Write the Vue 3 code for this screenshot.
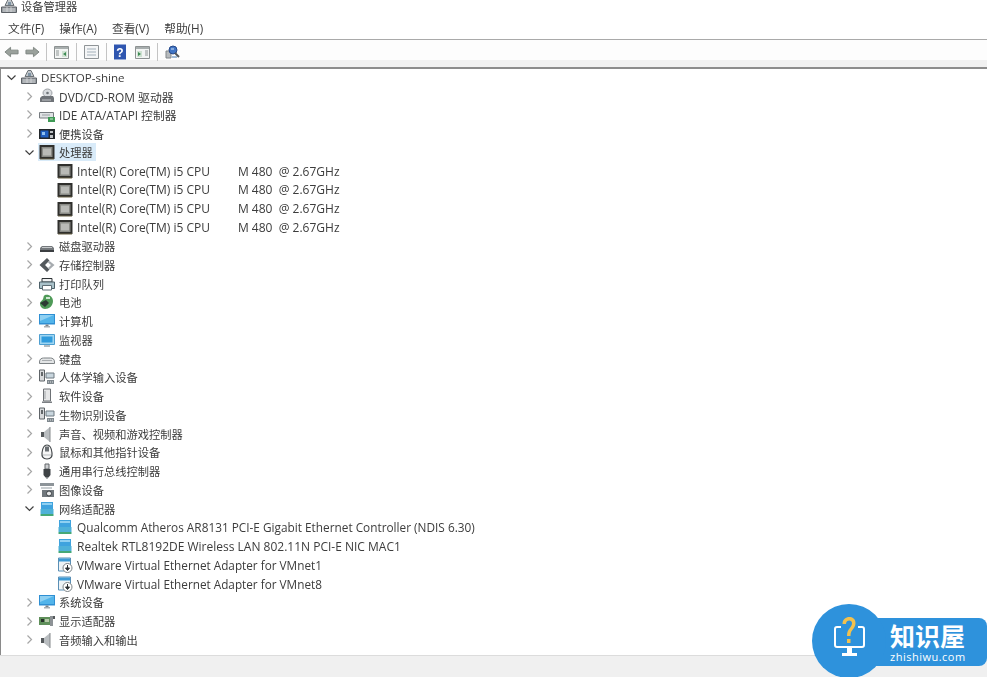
<script setup>
const menus = ['文件(F)', '操作(A)', '查看(V)', '帮助(H)']
const cpuName = 'Intel(R) Core(TM) i5 CPU         M 480  @ 2.67GHz'

// lv: tree depth, open: undefined = no arrow, fs: font size when it is not the CJK default
const rows = [
  { lv: 0, open: true, icon: 'host', text: 'DESKTOP-shine', fs: 11.6 },
  { lv: 1, open: false, icon: 'dvd', text: 'DVD/CD-ROM 驱动器', fs: 11.9 },
  { lv: 1, open: false, icon: 'ide', text: 'IDE ATA/ATAPI 控制器', fs: 11.8 },
  { lv: 1, open: false, icon: 'portable', text: '便携设备' },
  { lv: 1, open: true, icon: 'cpu', text: '处理器', selected: true },
  { lv: 2, icon: 'cpu', text: cpuName, fs: 12 },
  { lv: 2, icon: 'cpu', text: cpuName, fs: 12 },
  { lv: 2, icon: 'cpu', text: cpuName, fs: 12 },
  { lv: 2, icon: 'cpu', text: cpuName, fs: 12 },
  { lv: 1, open: false, icon: 'disk', text: '磁盘驱动器' },
  { lv: 1, open: false, icon: 'storage', text: '存储控制器' },
  { lv: 1, open: false, icon: 'printer', text: '打印队列' },
  { lv: 1, open: false, icon: 'battery', text: '电池' },
  { lv: 1, open: false, icon: 'computer', text: '计算机' },
  { lv: 1, open: false, icon: 'monitor', text: '监视器' },
  { lv: 1, open: false, icon: 'keyboard', text: '键盘' },
  { lv: 1, open: false, icon: 'hid', text: '人体学输入设备' },
  { lv: 1, open: false, icon: 'soft', text: '软件设备' },
  { lv: 1, open: false, icon: 'hid', text: '生物识别设备' },
  { lv: 1, open: false, icon: 'sound', text: '声音、视频和游戏控制器' },
  { lv: 1, open: false, icon: 'mouse', text: '鼠标和其他指针设备' },
  { lv: 1, open: false, icon: 'usb', text: '通用串行总线控制器' },
  { lv: 1, open: false, icon: 'camera', text: '图像设备' },
  { lv: 1, open: true, icon: 'net', text: '网络适配器' },
  { lv: 2, icon: 'net', text: 'Qualcomm Atheros AR8131 PCI-E Gigabit Ethernet Controller (NDIS 6.30)', fs: 11.82 },
  { lv: 2, icon: 'net', text: 'Realtek RTL8192DE Wireless LAN 802.11N PCI-E NIC MAC1', fs: 12 },
  { lv: 2, icon: 'vm', text: 'VMware Virtual Ethernet Adapter for VMnet1', fs: 11.76 },
  { lv: 2, icon: 'vm', text: 'VMware Virtual Ethernet Adapter for VMnet8', fs: 11.76 },
  { lv: 1, open: false, icon: 'computer', text: '系统设备' },
  { lv: 1, open: false, icon: 'display', text: '显示适配器' },
  { lv: 1, open: false, icon: 'sound', text: '音频输入和输出' },
]
</script>

<template>
  <div class="window">
    <svg class="defs" width="0" height="0">
      <symbol id="i-host" viewBox="0 0 16 16">
        <path d="M7 1.500h3l3 6H4z" fill="#c3c8cc" stroke="#6d7378"/>
        <path d="M7 4h3v3H7z" fill="#7f93a3"/>
        <path d="M.5 9h15v5.500H.5z" fill="#9a9fa4" stroke="#5c6166"/>
        <path d="M2 11h12M2 13h12M6 9v5M10 9v5" stroke="#dfe2e4" stroke-width=".7"/>
      </symbol>
      <symbol id="i-dvd" viewBox="0 0 16 16">
        <ellipse cx="8.500" cy="5" rx="4.500" ry="4" fill="#d9dcdf" stroke="#9a9ea3"/>
        <circle cx="8.500" cy="5" r="1.300" fill="#70757a"/>
        <path d="M1 10l2-2h11l1 2v4H1z" fill="#6f7378"/>
        <path d="M3 12h9" stroke="#c4c7ca"/>
      </symbol>
      <symbol id="i-ide" viewBox="0 0 16 16">
        <path d="M.5 5.500h14v5.500H.5z" fill="#dfe2e4" stroke="#777c80"/>
        <path d="M3 8h8" stroke="#9ba0a4"/>
        <path d="M9 10h7v5H9z" fill="#3f9a55"/>
        <path d="M11 12h3" stroke="#c7e8cf"/>
      </symbol>
      <symbol id="i-portable" viewBox="0 0 16 16">
        <path d="M0 3h16v10H0z" fill="#23272b"/>
        <path d="M1.500 4.500h8v7h-8z" fill="#1f5fc0"/>
        <path d="M3 6h3v3H3z" fill="#8ec0f0"/>
        <path d="M11 5h3v2h-3zM11 9h3v3h-3z" fill="#bfc3c6"/>
      </symbol>
      <symbol id="i-cpu" viewBox="0 0 16 16">
        <path d="M.5 1h15v14H.5z" fill="#2f2f2c"/>
        <path d="M2.500 3h11v10h-11z" fill="#8a8b86"/>
        <path d="M4 4.500h8v7H4z" fill="#b9bab6"/>
        <path d="M1 15h14" stroke="#6b6247"/>
      </symbol>
      <symbol id="i-disk" viewBox="0 0 16 16">
        <path d="M1 10l2-2h10l2 2v4H1z" fill="#74787c"/>
        <path d="M1 12h14v2H1z" fill="#3b3e41"/>
        <path d="M3 9.500h10" stroke="#c6c9cb"/>
      </symbol>
      <symbol id="i-storage" viewBox="0 0 16 16">
        <path d="M8 1L.5 8 8 15l2.500-2.500L6 8l4.500-4.500z" fill="#54595d"/>
        <path d="M10.500 4L15.500 8l-5 4.500L9 11l3-3-3-2.500z" fill="#a6abaf"/>
      </symbol>
      <symbol id="i-printer" viewBox="0 0 16 16">
        <path d="M3 2.500h10V6H3z" fill="#f1f2f3" stroke="#2d3235"/>
        <path d="M.5 6h15v6.500H.5z" fill="#a9c1c9" stroke="#4d6068"/>
        <path d="M3.500 9.500h9V14h-9z" fill="#fff" stroke="#5e6d74"/>
      </symbol>
      <symbol id="i-battery" viewBox="0 0 16 16">
        <path d="M6 1c4-1 8 2 8 6 0 5-4 8-8 8-3 0-5-3-5-5 0-3 2-3 3-5s0-3 2-4z" fill="#4f9a58"/>
        <path d="M1 9l6-3 3 3-4 4z" fill="#2c3a33"/>
        <path d="M7 3h4v2H7z" fill="#cfe7d2"/>
      </symbol>
      <symbol id="i-computer" viewBox="0 0 16 16">
        <path d="M0 1h16v10.500H0z" fill="#2f8fd3"/>
        <path d="M1 2h14v8H1z" fill="#52b4ea"/>
        <path d="M1 2h14L1 8z" fill="#8ed0f2"/>
        <path d="M5 13h6v1.500H5z" fill="#a7adb2"/>
        <path d="M6.500 11.500h3V13h-3z" fill="#7f858a"/>
      </symbol>
      <symbol id="i-monitor" viewBox="0 0 16 16">
        <path d="M.5 2.500h15v10H.5z" fill="#9fd6f2" stroke="#4e9fd1"/>
        <path d="M2.500 4.500h11v6h-11z" fill="#2f9bdc"/>
        <path d="M5 14h6" stroke="#9aa6ad" stroke-width="1.500"/>
      </symbol>
      <symbol id="i-keyboard" viewBox="0 0 16 16">
        <path d="M.5 11c0-3 2-4 4-4h7c2 0 4 1 4 4v1.500H.5z" fill="#e3e5e6" stroke="#7d8285"/>
        <path d="M3 9.500h10" stroke="#a8acaf"/>
      </symbol>
      <symbol id="i-hid" viewBox="0 0 16 16">
        <path d="M.5 1h5v11h-5z" fill="#d8dadc" stroke="#5f6468"/>
        <path d="M3 3v4" stroke="#3d4145" stroke-width="1.500"/>
        <path d="M7 4h8v5H7z" fill="#c9d6de" stroke="#6e7a82"/>
        <path d="M8 11h7v4H8z" fill="#7f888e"/>
        <path d="M9 13h1M11 13h1M13 13h1" stroke="#e3e5e6"/>
      </symbol>
      <symbol id="i-soft" viewBox="0 0 16 16">
        <path d="M4.500 1h7v12h-7z" fill="#e6e7e8" stroke="#6d7175"/>
        <path d="M6 3v8" stroke="#a1a5a8"/>
        <path d="M3 13.500h10V15H3z" fill="#7b7f83"/>
      </symbol>
      <symbol id="i-sound" viewBox="0 0 16 16">
        <path d="M2 6h3v5H2z" fill="#55595c"/>
        <path d="M5 6l6-5v15l-6-5z" fill="#b9bdc0"/>
        <path d="M11 1v15" stroke="#85898c"/>
      </symbol>
      <symbol id="i-mouse" viewBox="0 0 16 16">
        <path d="M8 1c3 0 4.500 3 5 8 .3 3-.5 6-5 6s-5.300-3-5-6c.5-5 2-8 5-8z" fill="#f6f6f6" stroke="#45494c" stroke-width="1.200"/>
        <path d="M6 2.500h4v5H6z" fill="#6b7074"/>
        <path d="M4 11h8" stroke="#b6babd"/>
      </symbol>
      <symbol id="i-usb" viewBox="0 0 16 16">
        <path d="M6 1h4v5H6z" fill="#cfd1d3" stroke="#63676a"/>
        <path d="M4.500 6h7v6l-2 2.500h-3l-2-2.500z" fill="#3f4346"/>
        <path d="M7.500 14h1v2h-1z" fill="#63676a"/>
      </symbol>
      <symbol id="i-camera" viewBox="0 0 16 16">
        <path d="M1 1h14v3H1z" fill="#8d9499"/>
        <path d="M2 5h11v2H2z" fill="#c9ced1"/>
        <path d="M3 8h12v7H3z" fill="#70777c"/>
        <circle cx="10" cy="11.500" r="2.500" fill="#e8eaeb" stroke="#3d4246"/>
      </symbol>
      <symbol id="i-net" viewBox="0 0 16 16">
        <path d="M2 1h12v7H2z" fill="#3fa3de"/>
        <path d="M3 2h10v2H3z" fill="#8fd0f2"/>
        <path d="M1.500 8h13v5h-13z" fill="#4fb1d8"/>
        <path d="M1.500 13h13v2h-13z" fill="#45a877"/>
      </symbol>
      <symbol id="i-vm" viewBox="0 0 16 16">
        <path d="M1.500 1h12v13h-12z" fill="#eef3f6" stroke="#5a8fb5"/>
        <path d="M2 1.500h11v3H2z" fill="#3d9ad6"/>
        <circle cx="10.500" cy="11" r="4.500" fill="#fff" stroke="#7b8185"/>
        <path d="M10.500 8v5M8.500 11l2 2.500 2-2.500z" stroke="#2d3134" fill="#2d3134"/>
      </symbol>
      <symbol id="i-display" viewBox="0 0 16 16">
        <path d="M0 4h11v8H0z" fill="#5f8f5a"/>
        <path d="M2 6h3v3H2z" fill="#26302a"/>
        <path d="M6 6h4v3H6z" fill="#b5c9a8"/>
        <path d="M11 3h3v10h-3z" fill="#8d9296"/>
        <path d="M14 3h2v3h-2z" fill="#55595c"/>
      </symbol>
    </svg>

    <div class="title">
      <svg class="ic"><use href="#i-host"/></svg>
      <span>设备管理器</span>
    </div>
    <div class="menu">
      <span v-for="m in menus" :key="m">{{ m }}</span>
    </div>

    <div class="toolbar">
      <svg class="tool arrow" viewBox="0 0 16 12"><path d="M1 6l6-5v3h8v4H7v3z" fill="#9aa19c" stroke="#7f8682"/></svg>
      <svg class="tool arrow" viewBox="0 0 16 12"><path d="M15 6L9 1v3H1v4h8v3z" fill="#9aa19c" stroke="#7f8682"/></svg>
      <i class="sep"></i>
      <svg class="tool" viewBox="0 0 15 14"><path d="M.5 1.500h14v12H.5z" fill="#f3f5f4" stroke="#8d9292"/><path d="M1 2h13v2H1z" fill="#a8aeae"/><path d="M2 6h3M2 8h3M2 10h3" stroke="#8f9696"/><path d="M8 6h5v6H8z" fill="#cfe3d2"/><path d="M12 7l-3 2 3 2z" fill="#3c8a52"/></svg>
      <i class="sep"></i>
      <svg class="tool" viewBox="0 0 15 14"><path d="M.5 .5h14v13H.5z" fill="#f5f6f7" stroke="#8f9497"/><path d="M3 4h9M3 7h9M3 10h9" stroke="#a3b0ba"/></svg>
      <i class="sep"></i>
      <svg class="tool help" viewBox="0 0 12 15"><path d="M0 0h12v15H0z" fill="#2f56b0"/><text x="6" y="12" class="q">?</text></svg>
      <svg class="tool" viewBox="0 0 15 14"><path d="M.5 1.500h14v12H.5z" fill="#f3f5f4" stroke="#8d9292"/><path d="M1 2h13v2H1z" fill="#a8aeae"/><path d="M10 6h3M10 8h3M10 10h3" stroke="#8f9696"/><path d="M2 6h5v6H2z" fill="#cfe3d2"/><path d="M3 7l3 2-3 2z" fill="#3c8a52"/></svg>
      <i class="sep"></i>
      <svg class="tool" viewBox="0 0 15 14"><path d="M1 6h5v7H1z" fill="#b6babd" stroke="#808589"/><circle cx="8" cy="5" r="4" fill="#3f74c4" stroke="#27498a"/><path d="M6 4h3" stroke="#cfe0f5"/><path d="M10 8l4 4" stroke="#50565b" stroke-width="2"/><path d="M7 11h5v2H7z" fill="#9fbbd8"/></svg>
    </div>
    <div class="band"></div>

    <div class="tree">
      <div v-for="(r, i) in rows" :key="i" class="row" :class="'lv' + r.lv">
        <span class="twisty">
          <svg v-if="r.open === false" viewBox="0 0 9 9" class="chev"><path d="M2.500 .5l4 4-4 4" fill="none" stroke="#a6a6a6" stroke-width="1.200"/></svg>
          <svg v-else-if="r.open" viewBox="0 0 9 9" class="chev"><path d="M.5 2.500l4 4 4-4" fill="none" stroke="#404040" stroke-width="1.200"/></svg>
        </span>
        <span class="cell" :class="{ selected: r.selected }">
          <svg class="ic"><use :href="'#i-' + r.icon"/></svg>
          <span class="label" :style="r.fs ? { fontSize: r.fs + 'px' } : null">{{ r.text }}</span>
        </span>
      </div>
    </div>
    <div class="status"></div>

    <div class="logo">
      <div class="logo-bar">
        <div class="logo-name">知识屋</div>
        <div class="logo-url">zhishiwu.com</div>
      </div>
      <div class="logo-round">
        <svg viewBox="0 0 46 46" class="logo-pc">
          <path d="M15 15h-4a2 2 0 0 0-2 2v16a2 2 0 0 0 2 2h25a2 2 0 0 0 2-2V17a2 2 0 0 0-2-2h-4" fill="none" stroke="#fff" stroke-width="2"/>
          <path d="M21 35h5v6h-5zM16 41h15v3H16z" fill="#fff"/>
          <path d="M16.500 12c0-9 13-9 13-1 0 6-5 6-5 13h-3.500c0-8 5-8 5-13 0-3.500-6-3.500-6 1z" fill="#f2c14e"/>
          <path d="M21 27h3.500v4H21z" fill="#f2c14e"/>
        </svg>
      </div>
    </div>
  </div>
</template>

<style scoped>
.window {
  position: relative;
  width: 987px;
  height: 677px;
  overflow: hidden;
  background: #fff;
  color: #3c3c3c;
  font-family: "Open Sans", "Noto Sans CJK SC", sans-serif;
  font-size: 11.250px;
}
.defs {
  position: absolute;
}
.title {
  height: 14px;
  display: flex;
  align-items: center;
  gap: 4px;
  padding-left: 1px;
  line-height: 13px;
  margin-top: -1px;
  padding-bottom: 1px;
  box-sizing: content-box;
  filter: blur(.35px);
}
.menu {
  height: 26px;
  box-sizing: border-box;
  display: flex;
  align-items: center;
  gap: 15px;
  padding: 2px 0 0 8px;
  border-bottom: 1px solid #a9a9a9;
  font-size: 11.700px;
}
.menu span {
  filter: blur(.35px);
}
.toolbar {
  height: 20px;
  display: flex;
  align-items: center;
  padding: 4px 0 0 4px;
  box-sizing: border-box;
  background: #fdfdfd;
  filter: blur(.35px);
}
.tool {
  width: 15px;
  height: 14px;
  margin: 0 7px;
  flex: none;
}
.tool.arrow {
  margin: 0 6px 0 0;
}
.tool.help {
  width: 12px;
  height: 16px;
  margin: 0 2px 0 7px;
}
.q {
  fill: #fff;
  font: bold 12px "Liberation Sans", sans-serif;
  text-anchor: middle;
}
.sep {
  width: 1px;
  height: 18px;
  background: #c4c4c4;
  flex: none;
}
.band {
  height: 7px;
  background: #f1f1f1;
  border-bottom: 2px solid #8c8c8c;
}
.tree {
  height: 587px;
  margin-top: -1px;
  border-left: 1px solid #8a8a8a;
  overflow: hidden;
  box-sizing: border-box;
  filter: blur(.35px);
}
.row {
  height: 18.750px;
  display: flex;
  align-items: center;
  white-space: pre;
}
.lv0 { padding-left: 1px; }
.lv1 { padding-left: 19px; }
.lv2 { padding-left: 37px; }
.twisty {
  width: 18px;
  height: 16px;
  display: flex;
  align-items: center;
  justify-content: center;
  flex: none;
}
.chev {
  width: 9px;
  height: 9px;
}
.cell {
  display: flex;
  align-items: center;
  height: 18px;
  padding: 0 3px 0 1px;
}
.cell.selected {
  background: #d9ebf9;
}
.ic {
  width: 16px;
  height: 16px;
  flex: none;
}
.label {
  margin-left: 4px;
}
.status {
  height: 22px;
  background: #f0f0f0;
  border-top: 1px solid #dcdcdc;
}
.logo {
  position: absolute;
  left: 812px;
  top: 604px;
  width: 175px;
  height: 73px;
}
.logo-round {
  position: absolute;
  left: 0;
  top: 0;
  width: 74px;
  height: 74px;
  border-radius: 50%;
  background: #2e92dc;
}
.logo-pc {
  position: absolute;
  left: 14px;
  top: 8px;
  width: 46px;
  height: 46px;
}
.logo-bar {
  position: absolute;
  left: 40px;
  right: 0;
  top: 14px;
  height: 48px;
  border-radius: 8px;
  background: #2e92dc;
  color: #fff;
}
.logo-name {
  position: absolute;
  left: 38px;
  top: 4px;
  font-size: 25px;
  line-height: 27px;
  font-weight: 700;
  font-family: "Noto Sans CJK SC", sans-serif;
}
.logo-url {
  position: absolute;
  left: 38px;
  top: 32px;
  font-size: 11px;
  line-height: 14px;
  letter-spacing: .5px;
  font-family: "Open Sans", sans-serif;
}
</style>
